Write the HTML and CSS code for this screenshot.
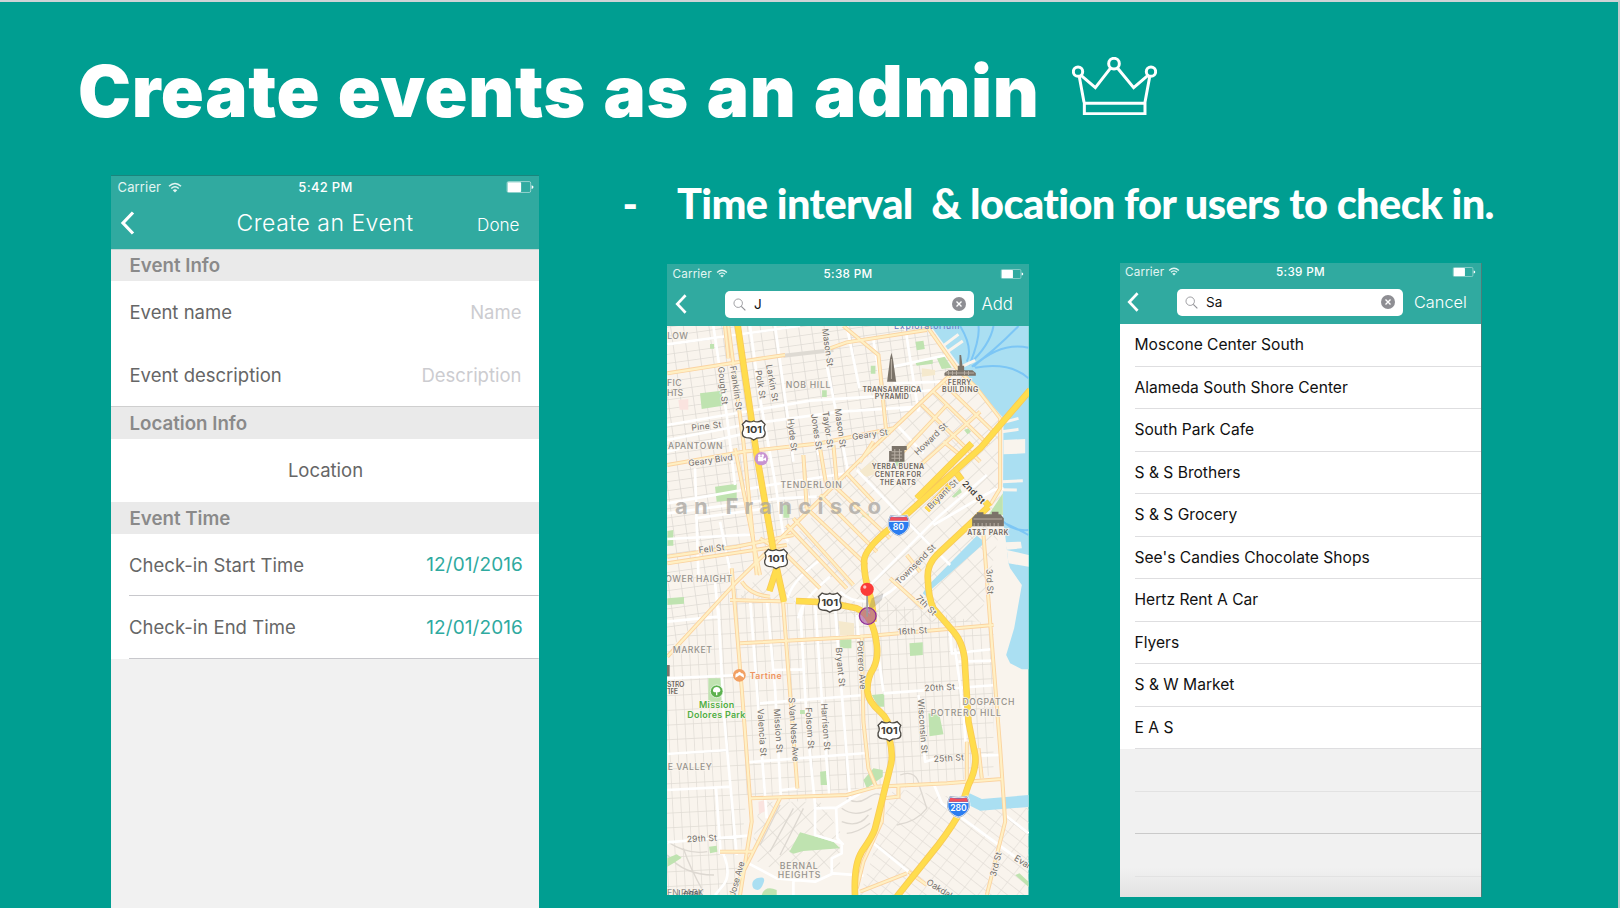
FILE: index.html
```html
<!DOCTYPE html>
<html lang="en">
<head>
<meta charset="utf-8">
<title>Create events as an admin</title>
<link rel="stylesheet" href="styles.css">
</head>
<body>
<svg class="defs" width="0" height="0">
  <symbol id="wifi" viewBox="0 0 28 22"><path d="M2 8.500Q14-2.500 26 8.500M6.500 13Q14 6 21.500 13" fill="none" stroke="currentColor" stroke-width="3.200"/><path d="M9.500 16.500Q14 12.500 18.500 16.500L14 21Z" fill="currentColor"/></symbol>
  <symbol id="battery" viewBox="0 0 72 32"><rect x="1.500" y="1.500" width="63" height="29" rx="4" fill="none" stroke="currentColor" stroke-width="2" opacity=".65"/><rect x="3" y="3" width="36" height="26" rx="2" fill="currentColor"/><path d="M67 11q5 1 5 5t-5 5Z" fill="currentColor"/></symbol>
  <symbol id="back" viewBox="0 0 14 24"><path d="M12.500 1.500L2.500 12L12.500 22.500" fill="none" stroke="currentColor" stroke-width="3.200"/></symbol>
  <symbol id="search" viewBox="0 0 40 40"><circle cx="16" cy="16" r="13" fill="none" stroke="currentColor" stroke-width="2.600"/><path d="M25.500 25.500L38 38" stroke="currentColor" stroke-width="3.400"/></symbol>
  <symbol id="clear" viewBox="0 0 14 14"><circle cx="7" cy="7" r="7" fill="#8e8e93"/><path d="M4.500 4.500l5 5M9.500 4.500l-5 5" stroke="#fff" stroke-width="1.400"/></symbol>
</svg>
<main class="slide">
  <header class="heading">
    <h1 class="title">Create events as an admin</h1>
    <svg class="crown" viewBox="0 0 255 175" fill="none" stroke="#fff" stroke-width="9">
      <circle cx="18" cy="44" r="14"/><circle cx="126" cy="20" r="16"/><circle cx="237" cy="44" r="14"/>
      <path d="M28 56L70 92L115 34M137 34L185 92L227 56M22 60L36 136M233 60L219 136M37 139H219V170H37Z"/>
    </svg>
  </header>
  <div class="content">
    <section class="phone phone-form">
      <div class="status"><span class="carrier">Carrier <svg class="wifi"><use href="#wifi"/></svg></span><span class="clock">5:42 PM</span><svg class="battery"><use href="#battery"/></svg></div>
      <div class="nav"><svg class="back"><use href="#back"/></svg><span class="nav-title">Create an Event</span><span class="done">Done</span></div>
      <h2 class="group group-first">Event Info</h2>
      <div class="field"><span>Event name</span><span class="hint">Name</span></div>
      <div class="field"><span class="desc">Event description</span><span class="hint">Description</span></div>
      <h2 class="group group-line">Location Info</h2>
      <div class="field centered"><span>Location</span></div>
      <h2 class="group group-time">Event Time</h2>
      <div class="field lined"><span class="start">Check-in Start Time</span><span class="date">12/01/2016</span></div>
      <div class="field lined"><span class="start">Check-in End Time</span><span class="date">12/01/2016</span></div>
    </section>
    <div class="right">
      <div class="bullet"><span class="dash">-</span><span class="bullet-text">Time interval  &amp; location for users to check in.</span></div>
      <div class="phones">
        <section class="phone small phone-map">
          <div class="status"><span class="carrier">Carrier <svg class="wifi"><use href="#wifi"/></svg></span><span class="clock">5:38 PM</span><svg class="battery"><use href="#battery"/></svg></div>
          <div class="nav"><svg class="back"><use href="#back"/></svg><div class="box"><svg class="search"><use href="#search"/></svg><span class="query">J</span><svg class="clear"><use href="#clear"/></svg></div><span class="action">Add</span></div>
          <svg class="map" viewBox="21 213 1084 1707" preserveAspectRatio="none">
            <defs>
              <pattern id="gN" width="38" height="27" patternUnits="userSpaceOnUse" patternTransform="rotate(-8)"><path d="M0 0H38M0 0V27" stroke="#dedad4" stroke-width="4.500" fill="none"/></pattern>
              <pattern id="gS" width="52" height="34" patternUnits="userSpaceOnUse" patternTransform="rotate(-43)"><path d="M0 0H52M0 0V34" stroke="#e0dbd4" stroke-width="4" fill="none"/></pattern>
              <pattern id="gM" width="25" height="44" patternUnits="userSpaceOnUse" patternTransform="rotate(-3)"><path d="M0 0H25M0 0V44" stroke="#e0dbd4" stroke-width="4" fill="none"/></pattern>
              <pattern id="gE" width="46" height="30" patternUnits="userSpaceOnUse" patternTransform="rotate(38)"><path d="M0 0H46M0 0V30" stroke="#e2ddd6" stroke-width="3.500" fill="none"/></pattern>
              <symbol id="us" viewBox="-36 -31 72 62" overflow="visible"><path d="M-23-28Q-12-21 0-27Q12-21 23-28L34-17Q27-6 34 6Q36 21 22 23Q8 23 0 30Q-8 23-22 23Q-36 21-34 6Q-27-6-34-17Z" fill="#fff" stroke="#4d4943" stroke-width="4"/><text y="10" text-anchor="middle" class="shield" textLength="50" lengthAdjust="spacingAndGlyphs">101</text></symbol>
              <symbol id="is" viewBox="-36 -34 72 68" overflow="visible"><path d="M-25-30Q0-25 25-30Q34-16 32 2Q26 24 0 32Q-26 24-32 2Q-34-16-25-30Z" fill="#2b7df0" stroke="#fff" stroke-width="5"/><path d="M-25-30Q0-25 25-30Q34-16 32 2Q26 24 0 32Q-26 24-32 2Q-34-16-25-30Z" fill="none" stroke="#8a98ad" stroke-width="2"/><path d="M-24-26Q0-22 24-26L28-14H-28Z" fill="#f0505c"/><path d="M-29-12H29" stroke="#fff" stroke-width="3"/></symbol>
            </defs>
            <rect x="21" y="213" width="1084" height="1707" fill="#f9f4ed"/>
            <path d="M21 213H812L890 340L590 640L225 985L21 1190Z" fill="url(#gN)"/>
            <path d="M890 340L1020 490V820L960 1100H640L380 1035H230L590 640Z" fill="url(#gS)"/>
            <path d="M21 1190L225 1000L380 1040H660L1000 1110V1560L720 1600L640 1590L420 1640L260 1620L230 1920H21Z" fill="url(#gM)"/>
            <path d="M700 1600L1105 1660V1920H600Z" fill="url(#gE)"/>
            <path d="M300 1640L480 1640L540 1730V1840L400 1870L270 1810Z" fill="url(#gS)"/>
            <g fill="none" stroke="#ddd8d1" stroke-width="4"><path d="M560 1630q30 20 60 0t40-10M545 1660q40 30 90 0M545 1700q50 20 80-20M560 1735q30 0 70-30M22 1760q60 40 120 30M22 1800q50 60 140 60M70 1780q20 60 60 130M400 1660l-70 130M430 1660l-70 140M360 1650l-60 120M720 1560q50-20 60 40l20 60q-30 40-90 50"/></g>
            <g class="water">
              <path d="M812 213L890 320L960 410L1030 490L1028 790L1035 840L1045 925L1050 940L1085 990L1062 1120L1038 1200L1050 1225L1085 1243L1105 1243V213Z"/>
              <path d="M950 842L975 862L870 955L815 1002L800 1025L788 1015L800 995Z"/>
              <path d="M928 1615L965 1632L1105 1620V1656L960 1667L915 1645Z"/>
              <path d="M290 1870q30-10 20 15q-10 30-30 15q-10-20 10-30Z"/>
            </g>
            <g fill="none" stroke="#7cc6f5" stroke-width="6"><path d="M925 330Q990 270 1000 213M930 325Q960 250 955 213M935 335Q1000 290 1075 213M940 335Q1020 260 1105 278M945 338Q1050 320 1105 370M900 213Q940 280 920 320M1030 800Q1060 830 1105 825M1035 805Q1070 820 1105 840" /></g>
            <g stroke="#f9f4ed" stroke-width="9" fill="none"><path d="M850 272L895 238M862 290L908 258M905 335L945 316M1020 505L1075 490M1025 530L1075 523M1025 680L1088 677M1025 704L1070 705"/></g>
            <path d="M1030 555L1095 552V595L1030 598ZM1035 862L1082 860L1085 880L1040 884ZM1045 925L1105 935V900L1040 885Z" fill="#f9f4ed"/>
            <g fill="#bfe3b0"><path d="M120 415L185 407L188 452L125 462ZM766 260L790 257L794 282L770 286ZM150 267h12v14h-12ZM632 332h14v24h-14ZM486 406h14v20h-14ZM765 320L818 314V326L770 332ZM828 305L850 300L875 338L845 342ZM165 695L230 686V734L170 740ZM22 828L40 825V872H22ZM370 750h18v38h-18ZM912 525L925 520L932 530L922 538ZM1028 715V780H985ZM700 610L735 615L710 635ZM22 1030L72 1026V1046L22 1050ZM145 1270H186V1340H145ZM540 1153H574V1180H540ZM748 1165L788 1162V1200L750 1203ZM635 1320L672 1316V1355H655ZM805 1375L838 1380L850 1438L808 1444ZM420 1365h16v12h-16ZM480 1550L498 1548L501 1590H482ZM610 1575L640 1540L668 1545V1565L620 1600ZM388 1790L420 1732L520 1760L540 1780L430 1788L400 1796ZM147 1775L170 1772L172 1790L150 1795ZM22 1810L50 1798L65 1808L40 1825L22 1835ZM305 1920Q315 1890 350 1905V1920ZM1065 1860L1078 1855L1105 1880V1895ZM875 725L900 700L905 712L882 728ZM604 782L625 775L628 795Z"/></g>
            <path d="M590 655L640 615L665 650L620 665ZM785 340L825 345V360L785 365ZM535 1098L582 1105V1140H540Z" fill="#f5e9cd"/>
            <path d="M55 435l30-3v32h-26ZM295 1640l20-5v34l-18 8Z" fill="#fae3df"/>
            <path d="M370 302L520 285" stroke="#dedad3" stroke-width="12"/>
            <g class="white">
              <path d="M22 268L420 213M22 510L450 437L640 425L815 405M22 555L250 510L540 470L780 455M22 745L330 690L560 655M22 775L360 730L470 725M105 790L320 760M22 852L285 838"/>
              <path d="M160 213L200 480L225 690M270 213L300 430L345 680L370 840L385 860M345 213L385 500L400 620M500 330L565 655M560 213L598 400M455 480L475 600M735 215L775 470M640 255L665 400M105 640L115 960M180 800L215 970M700 335L860 300M700 385L840 380M20 590L190 550L280 530"/>
              <path d="M590 645L710 770L870 930M820 810L1000 705L1030 700M630 990L830 790L980 660M710 510L790 595M780 460L720 465"/>
              <path d="M22 1100L175 1085L165 980M175 1060L190 1360L230 1800M270 1030L320 1690M320 1030L345 1300L362 1620M430 1050L422 1090L440 1400L465 1650V1740L545 1765V1795L515 1810V1860M465 1045L490 1400L508 1625M525 1060L570 1630M590 1080L598 1190M635 1060L670 1310M340 1245L430 1243M22 1270L240 1260M300 1345L615 1320M670 1315L1010 1290M870 1130L875 1195L1000 1182M895 1220L1005 1217M885 1180L910 1370L920 1520M775 1320L795 1520L830 1510M22 1497L205 1485M260 1522L620 1494M955 1502L1022 1500M22 1605L215 1595M365 1605L412 1600M22 1762L265 1742M168 1600L182 1795L275 1790M190 1795Q215 1860 190 1890L165 1920M465 1660L530 1658L600 1615M528 1655L532 1750L550 1770M265 1825L350 1870L465 1880L520 1855L610 1862M400 1875V1920M640 1765L745 1850L850 1920M820 1585L845 1645L1105 1835M1035 1680L1105 1735"/>
              <path d="M380 1040Q390 980 480 915M415 1090Q420 1040 510 965M540 1010Q580 1050 650 1035L690 1010L775 940"/>
            </g>
            <g class="arterial-edge"><use href="#arteries"/></g>
            <g class="arterial"><path id="arteries" d="M22 355L320 308L375 300M195 213L205 310M205 213L250 560L290 960M510 280L560 262L800 225M550 213L655 300L680 545M800 213L890 340L950 400L1020 490V700L990 750M22 630L250 590L480 565L700 520M22 905L230 875L400 840M22 925L380 870M225 580L300 960M22 1205L225 985L600 615L870 360M380 810L560 1000M400 790L580 990M440 760L620 930M480 720L650 890M520 690L690 850M560 655L640 740M430 600L440 760M480 580L500 700M520 570L530 680M640 560L600 620M300 850L380 900L480 1000M720 600L860 450M770 640L960 470M785 450L960 620M820 410L985 570M850 385L1000 530M850 560L900 600M240 1165L600 1145L1000 1110M215 940L245 1300L275 1700L240 1920M365 990L385 1250L412 1600M210 1035L400 1040M245 980Q270 1020 330 1025M605 1140L610 1400L625 1540L650 1600M270 1630L560 1620L650 1595L860 1585L1025 1572M715 1595V1625L670 1630L665 1700L610 1820L590 1900M360 1630L215 1920M990 1100L1020 1480L1035 1700L980 1920M970 840L990 1100M690 970L790 1060M600 1910L740 1855M745 1850L800 1890M955 1480L965 1570M920 1460V1580M180 1790L280 1790M740 900L780 950"/></g>
            <g class="highway-edge"><use href="#highways"/></g>
            <g class="highway"><path id="highways" d="M232 205L290 600L348 930L372 1040M350 940L328 1008M408 1038L500 1042L590 1060Q640 1080 650 1170Q655 1210 640 1240Q620 1270 622 1310Q625 1340 660 1370Q695 1400 688 1450Q700 1500 692 1530L645 1720Q640 1740 605 1790Q580 1830 585 1925M1110 405L960 580L715 800Q610 880 612 920Q612 960 625 1005Q640 1050 640 1100M935 565L770 730M985 755L830 900Q800 930 803 970Q805 1030 820 1060L880 1130Q915 1170 915 1240L925 1400L945 1500Q950 1540 925 1590L895 1680Q860 1740 810 1800L710 1925M890 655L905 675M975 740L988 755M800 765L870 690"/></g>
            <path d="M380 1036L402 1038" stroke="#f3f1ec" stroke-width="16"/>
            <g class="label district">
              <text x="22" y="251" textLength="62">LOW</text><text x="21" y="394" textLength="44">FIC</text><text x="21" y="422" textLength="48">HTS</text><text x="377" y="398" textLength="134">NOB HILL</text><text x="24" y="582" textLength="164">APANTOWN</text><text x="361" y="700" textLength="184">TENDERLOIN</text><text x="16" y="980" textLength="200">OWER HAIGHT</text><text x="38" y="1193" textLength="118">MARKET</text><text x="907" y="1349" textLength="156">DOGPATCH</text><text x="812" y="1383" textLength="210">POTRERO HILL</text><text x="23" y="1546" textLength="132">E VALLEY</text><text x="359" y="1842" textLength="114">BERNAL</text><text x="353" y="1870" textLength="128">HEIGHTS</text><text x="21" y="1922" textLength="110">EN PARK</text>
            </g>
            <text class="city" x="45" y="776" textLength="618">an Francisco</text>
            <g class="label street">
              <text transform="translate(486 222) rotate(82)" textLength="114">Mason St</text>
              <text transform="translate(174 336) rotate(84)" textLength="114">Gough St</text>
              <text transform="translate(210 334) rotate(82)" textLength="134">Franklin St</text>
              <text transform="translate(286 347) rotate(81)" textLength="86">Polk St</text>
              <text transform="translate(318 330) rotate(80)" textLength="112">Larkin St</text>
              <text transform="translate(382 492) rotate(83)" textLength="98">Hyde St</text>
              <text transform="translate(453 478) rotate(82)" textLength="108">Jones St</text>
              <text transform="translate(487 470) rotate(82)" textLength="110">Taylor St</text>
              <text transform="translate(524 462) rotate(82)" textLength="118">Mason St</text>
              <text transform="translate(95 527) rotate(-6)" textLength="90">Pine St</text>
              <text transform="translate(577 555) rotate(-8)" textLength="108">Geary St</text>
              <text transform="translate(86 634) rotate(-8)" textLength="134">Geary Blvd</text>
              <text transform="translate(117 894) rotate(-6)" textLength="78">Fell St</text>
              <text transform="translate(773 602) rotate(-44)" textLength="126">Howard St</text>
              <text transform="translate(812 764) rotate(-44)" textLength="116">Bryant St</text>
              <text class="dark" transform="translate(905 688) rotate(46)" textLength="84">2nd St</text>
              <text transform="translate(717 990) rotate(-45)" textLength="158">Townsend St</text>
              <text transform="translate(766 1031) rotate(45)" textLength="74">7th St</text>
              <text transform="translate(978 942) rotate(87)" textLength="76">3rd St</text>
              <text transform="translate(714 1139) rotate(-3)" textLength="88">16th St</text>
              <text transform="translate(793 1309) rotate(-3)" textLength="92">20th St</text>
              <text transform="translate(821 1521) rotate(-3)" textLength="91">25th St</text>
              <text transform="translate(81 1762) rotate(-3)" textLength="90">29th St</text>
              <text transform="translate(527 1178) rotate(85)" textLength="118">Bryant St</text>
              <text transform="translate(590 1158) rotate(86)" textLength="146">Potrero Ave</text>
              <text transform="translate(292 1362) rotate(86)" textLength="142">Valencia St</text>
              <text transform="translate(341 1362) rotate(86)" textLength="132">Mission St</text>
              <text transform="translate(385 1328) rotate(86)" textLength="192">S Van Ness Ave</text>
              <text transform="translate(436 1358) rotate(86)" textLength="124">Folsom St</text>
              <text transform="translate(483 1346) rotate(86)" textLength="140">Harrison St</text>
              <text transform="translate(773 1332) rotate(86)" textLength="164">Wisconsin St</text>
              <text transform="translate(224 1926) rotate(-74)" textLength="108">Jose Ave</text>
              <text transform="translate(1007 1866) rotate(-76)" textLength="74">3rd St</text>
              <text transform="translate(1060 1814) rotate(32)">Evans</text>
              <text transform="translate(797 1886) rotate(32)">Oakdale</text>
            </g>
            <g class="label place">
              <text x="607" y="410" textLength="176">TRANSAMERICA</text><text x="644" y="433" textLength="102">PYRAMID</text><text x="863" y="389" textLength="70">FERRY</text><text x="846" y="412" textLength="108">BUILDING</text><text x="635" y="643" textLength="157">YERBA BUENA</text><text x="644" y="667" textLength="139">CENTER FOR</text><text x="659" y="690" textLength="108">THE ARTS</text><text x="921" y="841" textLength="124">AT&amp;T PARK</text><text x="21" y="1295" textLength="52">STRO</text><text x="21" y="1317" textLength="33">TRE</text>
            </g>
            <text class="label museum" x="702" y="222" textLength="196">Exploratorium</text>
            <text class="label legal" x="55" y="1923" textLength="68">Legal</text>
            <text class="label food" x="269" y="1273" textLength="96">Tartine</text>
            <g class="label park"><text x="117" y="1358" textLength="106">Mission</text><text x="82" y="1388" textLength="174">Dolores Park</text></g>
            <g fill="#7b7369"><path d="M694 293L698 310L708 380H681L690 310Z"/><path d="M898 300h5l4 32h5v14h25l10 8v8h-94v-8l12-8h28v-14h5Z"/><path d="M695 573h45v12h-7v35h-46v-32h8Z"/><path d="M936 790l10-12h75l10 12v24h-95ZM950 772h20v6h-20ZM995 770h20v8h-20Z"/><path d="M21 1230h8v34h-8Z"/></g>
            <path d="M694 312v60M858 354h84M865 348v12M877 348v12M889 348v12M913 348v12M925 348v12M694 590h32M694 600h32M694 610h32M704 582v36M718 582v36M940 792h86M942 804v9M954 804v9M966 804v9M978 804v9M990 804v9M1002 804v9M1014 804v9" stroke="#b7aea3" stroke-width="3"/>
            <circle cx="304" cy="611" r="20" fill="#c893d1"/><path d="M294 606h16v13h-16ZM310 612l8-5v11l-8-4Z" fill="#fff"/><circle cx="298" cy="602" r="4" fill="#fff"/><circle cx="308" cy="602" r="4" fill="#fff"/>
            <circle cx="238" cy="1261" r="19" fill="#f2a063"/><path d="M226 1268q-1-15 7-13q5-10 11 0q8-1 8 13l-8-4q-5-6-10 0Z" fill="#fff"/>
            <circle cx="170" cy="1309" r="19" fill="#5cb14e" stroke="#fff" stroke-width="2"/><path d="M168 1312q-11 0-9-7q2-9 11-9t11 9q1 7-9 7v9h-4Z" fill="#fff"/>
            <use href="#us" x="245" y="494" width="72" height="62"/><use href="#us" x="312" y="880" width="72" height="62"/><use href="#us" x="473" y="1011" width="72" height="62"/><use href="#us" x="652" y="1397" width="72" height="62"/>
            <use href="#is" x="680" y="777" width="72" height="68"/><text class="ishield" x="715" y="825">80</text>
            <use href="#is" x="857" y="1620" width="76" height="70"/><text class="ishield" x="895" y="1667">280</text>
            <path d="M622 1075L635 1030L670 1015L665 1035Z" fill="#777" opacity=".3"/>
            <circle cx="623" cy="1083" r="25" fill="#a44fa0" fill-opacity=".6" stroke="#8e2a96" stroke-width="4"/><path d="M621 1020V1085" stroke="#9c9c9c" stroke-width="5"/><circle cx="621" cy="1003" r="20" fill="#fb3b38"/><circle cx="614" cy="996" r="5" fill="#ffc4c0"/>
          </svg>
        </section>
        <section class="phone small phone-list">
          <div class="status"><span class="carrier">Carrier <svg class="wifi"><use href="#wifi"/></svg></span><span class="clock">5:39 PM</span><svg class="battery"><use href="#battery"/></svg></div>
          <div class="nav"><svg class="back"><use href="#back"/></svg><div class="box"><svg class="search"><use href="#search"/></svg><span class="query">Sa</span><svg class="clear"><use href="#clear"/></svg></div><span class="action">Cancel</span></div>
          <ul class="results">
            <li>Moscone Center South</li><li>Alameda South Shore Center</li><li>South Park Cafe</li><li>S &amp; S Brothers</li><li>S &amp; S Grocery</li><li>See's Candies Chocolate Shops</li><li>Hertz Rent A Car</li><li>Flyers</li><li>S &amp; W Market</li><li>E A S</li>
          </ul>
          <div class="empty"><i></i><i class="strong"></i><i></i></div>
        </section>
      </div>
    </div>
  </div>
</main>
</body>
</html>
```
FILE: styles.css
```css
* { box-sizing: border-box; }
body { margin: 0; background: #009e91; font-family: Inter, "Liberation Sans", sans-serif; }
.defs { display: block; height: 0; }
.slide { width: 1620px; height: 908px; overflow: hidden; border-top: 2px solid #ced3d6; border-right: 2px solid #c4cbcd; color: #fff; }
.heading { display: flex; height: 173px; padding: 49px 0 0 78px; }
.title { margin: 0; width: 973px; font-size: 71px; line-height: 80px; font-weight: 900; letter-spacing: .600px; word-spacing: 3px; white-space: nowrap; }
.crown { width: 85px; height: 58.3px; margin: 5.500px 0 0 21px; }
.content { display: flex; padding-left: 111px; }
.phone { display: flex; flex-direction: column; flex: none; }
.phone-form { width: 427.500px; height: 733px; background: #f1f1f1; color: #666; font-size: 18.500px; }
.status { display: grid; grid-template-columns: 1fr auto 1fr; align-items: center; background: #30aaa0; color: #fff; height: 25px; padding: 0 5px 2px 6.500px; font-size: 13px; border-top: 1px solid #1a857c; }
.carrier { display: flex; align-items: center; gap: 7px; color: #e2f5f2; letter-spacing: .15px; }
.wifi { width: 14px; height: 11px; }
.clock { font-weight: 500; letter-spacing: .3px; }
.battery { width: 28px; height: 12px; justify-self: end; }
.nav { display: flex; align-items: center; height: 49px; background: #30aaa0; color: #fff; padding: 0 19px 4px 9px; }
.back { width: 15px; height: 24px; flex: none; }
.nav-title { flex: 1; padding-left: 66px; text-align: center; font-size: 23px; font-weight: 300; letter-spacing: .5px; padding-right: 28px; }
.done { font-size: 17.100px; font-weight: 300; padding-top: 3px; }
.group { margin: 0; height: 32px; padding-left: 18.500px; background: #eaeaea; color: #8a8a8a; font-size: 18.700px; line-height: 33px; font-weight: 600; }
.group-first { border-top: 1px solid #c4d8d6; line-height: 31px; }
.group-line { border-top: 1px solid #cfcfcf; height: 33px; }
.field { display: flex; justify-content: space-between; align-items: center; height: 62.500px; margin: 0; padding: 0 17px 0 18.500px; background: #fff; }
.hint { color: #ccccd0; }
.centered { justify-content: center; padding-bottom: 1px; }
.lined { padding-left: 0; padding-right: 15.500px; border-left: 18.500px solid #fff; background: linear-gradient(#c8c8cc, #c8c8cc) bottom / 100% 1px no-repeat #fff; }
.start { letter-spacing: .03px; }
.date { color: #2faa9f; font-size: 19px; letter-spacing: .1px; }
.right { padding-left: 84px; }
.bullet { display: flex; height: 89px; font: 900 41.500px/56px Lato, sans-serif; letter-spacing: -.6px; white-space: pre; }
.dash { width: 54.500px; }
.phones { display: flex; padding-left: 44.500px; }
.small { height: 631px; width: 361.500px; }
.small .status { height: 21px; font-size: 11.700px; border-top: 0; padding: 0 5px 1.500px 5.500px; }
.small .carrier { gap: 4px; }
.small .wifi { width: 12px; height: 9px; }
.small .battery { width: 24px; height: 10px; }
.small .nav { height: 41px; padding: 0 0 3px 8px; }
.small .back { width: 12px; height: 20px; }
.box { display: flex; align-items: center; width: 249px; height: 27px; margin-left: 38px; padding: 0 8px; border-radius: 5px; background: #fff; color: #111; font-size: 13.500px; }
.search { width: 13px; height: 13px; color: #8e8e93; margin-right: 8px; }
.query { flex: 1; }
.clear { width: 14px; height: 14px; }
.action { padding-left: 7.500px; font-size: 16.800px; font-weight: 300; }
.map { display: block; width: 361.500px; height: 569px; }
.phone-list { width: 362px; height: 634.500px; margin: -1.500px 0 0 91.500px; border-right: 1.500px solid #4c7d78; background: #f1f1f1; }
.small.phone-list .nav { padding-left: 7px; padding-bottom: 2px; height: 41.500px; }
.phone-list .box { width: 226px; margin-left: 38px; }
.phone-list .action { padding-left: 11px; font-size: 16.300px; }
.small.phone-list .status { height: 20px; padding-left: 5px; }
.results { list-style: none; margin: 0; padding: 0; background: #fff; color: #111; font-size: 15.600px; }
.results li { height: 42.500px; margin-left: 14.500px; border-bottom: 1px solid #dedee0; line-height: 41.500px; }
.empty { flex: 1; padding-left: 14.500px; background: linear-gradient(transparent 80%, #e2e2e2); }
.empty i { display: block; height: 42.500px; border-bottom: 1px solid #e2e2e2; }
.empty .strong { border-color: #cacaca; }
.water { fill: #aadff2; }
.white { fill: none; stroke: #fff; stroke-width: 8; stroke-linejoin: round; }
.arterial { fill: none; stroke: #fff0c4; stroke-width: 6.500; }
.arterial-edge { fill: none; stroke: #fbd3a0; stroke-width: 12; }
.highway { fill: none; stroke: #ffdd4d; stroke-width: 15; stroke-linejoin: round; }
.highway-edge { fill: none; stroke: #f8ca58; stroke-width: 20; stroke-linejoin: round; }
.label { fill: #7c7873; paint-order: stroke; stroke: #f9f4ed; stroke-width: 5px; stroke-linejoin: round; }
.district { font-size: 26px; font-weight: 500; fill: #96928c; }
.street { font-size: 26px; fill: #716d68; }
.dark { fill: #3e3c38; font-weight: 600; }
.place { font-size: 21px; font-weight: 600; fill: #6e675f; }
.city { font-size: 66px; font-weight: 700; fill: #a8a5a0; opacity: .75; }
.museum { font-size: 26px; fill: #6673c5; stroke: none; }
.legal { font-size: 24px; fill: #555; stroke: none; }
.food { font-size: 26px; font-weight: 600; fill: #ee9560; }
.park { font-size: 27px; font-weight: 600; fill: #4fae43; }
.shield { font-size: 28px; font-weight: 700; fill: #3e3b36; }
.ishield { font-size: 26px; font-weight: 600; fill: #fff; text-anchor: middle; }
```
